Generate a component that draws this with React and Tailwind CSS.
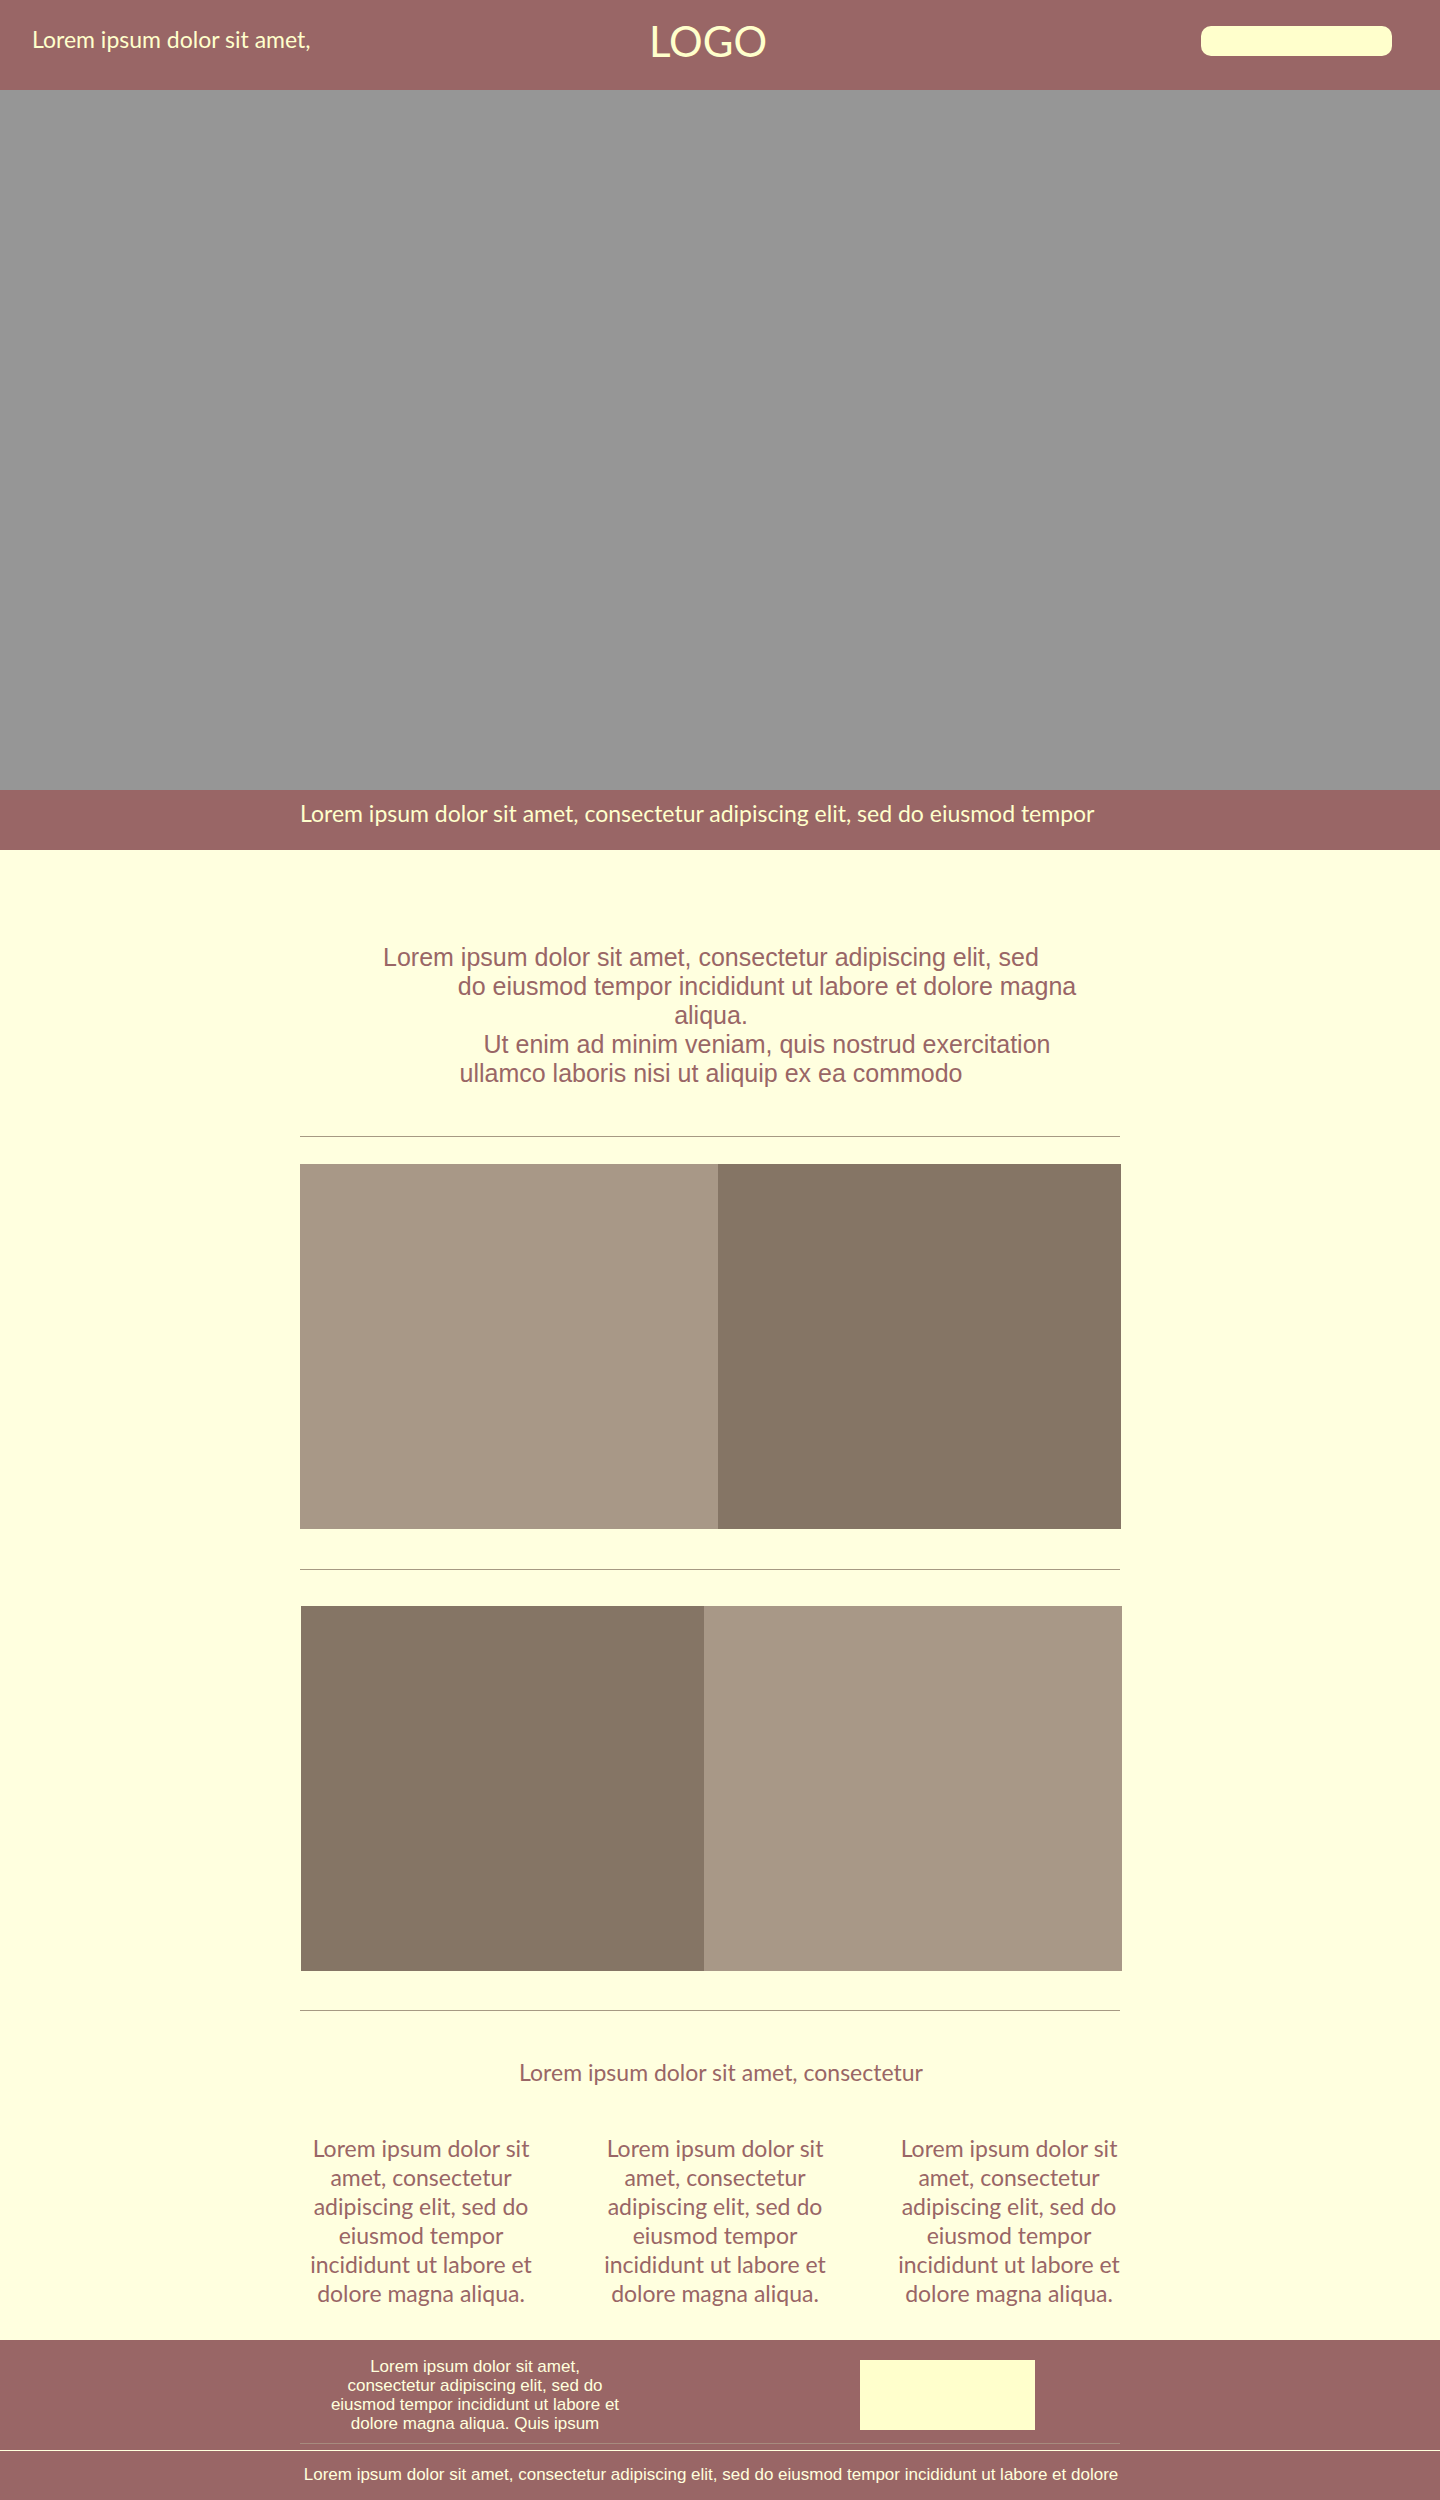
const LOREM_SHORT = 'Lorem ipsum dolor sit amet,';

const columns = [
  { id: 'first', lines: ['Lorem ipsum dolor sit', 'amet, consectetur', 'adipiscing elit, sed do', 'eiusmod tempor', 'incididunt ut labore et', 'dolore magna aliqua.'] },
  { id: 'second', lines: ['Lorem ipsum dolor sit', 'amet, consectetur', 'adipiscing elit, sed do', 'eiusmod tempor', 'incididunt ut labore et', 'dolore magna aliqua.'] },
  { id: 'third', lines: ['Lorem ipsum dolor sit', 'amet, consectetur', 'adipiscing elit, sed do', 'eiusmod tempor', 'incididunt ut labore et', 'dolore magna aliqua.'] },
];

const footerLines = [
  LOREM_SHORT,
  'consectetur adipiscing elit, sed do',
  'eiusmod tempor incididunt ut labore et',
  'dolore magna aliqua. Quis ipsum',
];

function Container({ className = '', children }) {
  return (
    <div className="pr-[18px]">
      <div className={`mx-auto w-full max-w-[822px] ${className}`}>{children}</div>
    </div>
  );
}

function Header() {
  return (
    <header className="grid grid-cols-[1fr_auto_1fr] items-center bg-[#996666] px-8 pt-4 pb-6 text-[#ffffcc]">
      <p className="pb-1 text-[23px] leading-[29px]">{LOREM_SHORT}</p>
      <a href="#top" className="mr-6 text-[42px] leading-[50px]">LOGO</a>
      <button
        type="button"
        aria-label="Menu"
        className="mr-4 h-[30px] w-[191px] justify-self-end rounded-[10px] bg-[#ffffcc]"
      />
    </header>
  );
}

function Rule() {
  return <hr className="mr-[2px] border-0 border-t border-[#a69983]" />;
}

function Intro() {
  return (
    <p className="pt-[93px] pb-12 text-center font-['Liberation_Sans',sans-serif] text-[25px] leading-[29px]">
      <span className="block">Lorem ipsum dolor sit amet, consectetur adipiscing elit, sed</span>
      <span className="block pl-28">do eiusmod tempor incididunt ut labore et dolore magna</span>
      <span className="block">aliqua.</span>
      <span className="block pl-28">Ut enim ad minim veniam, quis nostrud exercitation</span>
      <span className="block">ullamco laboris nisi ut aliquip ex ea commodo</span>
    </p>
  );
}

function Footer() {
  return (
    <footer className="bg-[#996666] font-['Liberation_Sans',sans-serif] text-[17px] leading-[19px] text-[#ffffdd]">
      <Container>
        <div className="flex items-start justify-between pt-4 pr-[87px] pl-[15px]">
          <p className="w-80 pt-px text-center">
            {footerLines.map((line) => (
              <span key={line} className="block">{line}</span>
            ))}
          </p>
          <div className="mt-1 h-[70px] w-[175px] bg-[#ffffcc]" />
        </div>
        <hr className="mt-[10px] mr-[2px] border-0 border-t border-[#a68b7e]" />
      </Container>
      <div className="mt-[6px] border-t border-[#ffffdd] pt-[14px] pb-4">
        <Container>
          <p className="text-center">
            Lorem ipsum dolor sit amet, consectetur adipiscing elit, sed do eiusmod tempor incididunt ut labore et dolore
          </p>
        </Container>
      </div>
    </footer>
  );
}

export default function App() {
  return (
    <div id="top" className="bg-[#ffffdf] font-['Lato',sans-serif] text-[#996666]">
      <Header />
      <div className="h-[700px] bg-[#969696]" />
      <div className="bg-[#996666] pt-[9px] pb-[22px] text-[#ffffcc]">
        <Container>
          <h1 className="text-[23px] leading-[29px]">
            Lorem ipsum dolor sit amet, consectetur adipiscing elit, sed do eiusmod tempor
          </h1>
        </Container>
      </div>
      <main>
        <Container>
          <Intro />
          <Rule />
          <div className="mt-[27px] mr-px mb-10 grid h-[365px] grid-cols-[418fr_403fr]">
            <div className="bg-[#a89887]" />
            <div className="bg-[#857565]" />
          </div>
          <Rule />
          <div className="mt-9 mb-[39px] ml-px grid h-[365px] grid-cols-[403fr_418fr]">
            <div className="bg-[#857565]" />
            <div className="bg-[#a89887]" />
          </div>
          <Rule />
          <section className="pt-[47px] pb-8 text-center text-[23px] leading-[29px]">
            <h2 className="pl-5">Lorem ipsum dolor sit amet, consectetur</h2>
            <div className="mt-[47px] flex justify-between pl-2">
              {columns.map((column) => (
                <p key={column.id} className="w-[226px]">
                  {column.lines.map((line) => (
                    <span key={line} className="block">{line}</span>
                  ))}
                </p>
              ))}
            </div>
          </section>
        </Container>
      </main>
      <Footer />
    </div>
  );
}
